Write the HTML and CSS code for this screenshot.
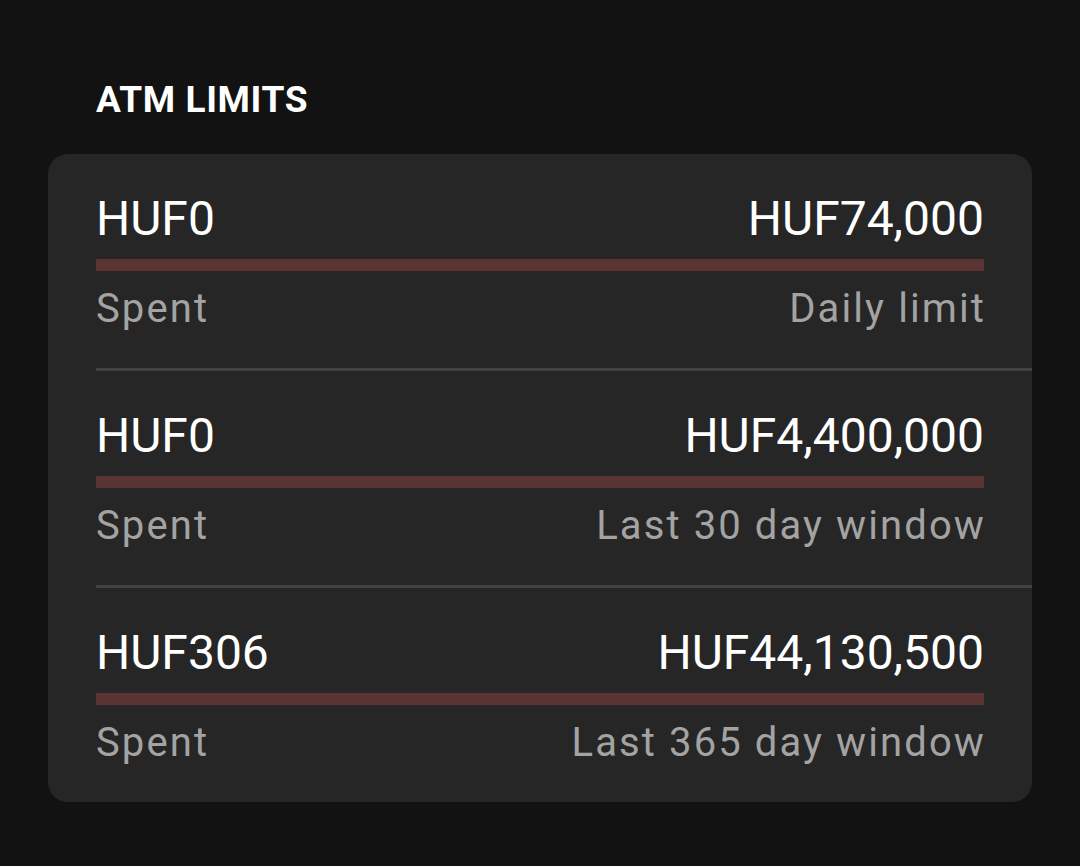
FILE: index.html
```html
<!DOCTYPE html>
<html lang="en">
<head>
    <meta charset="UTF-8">
    <meta name="viewport" content="width=device-width, initial-scale=1.0">
    <link rel="stylesheet" href="styles.css">
    <title>ATM limits</title>
</head>
<body>

<div class="page">
    <h2 class="section-title">ATM LIMITS</h2>

    <div class="card">
        <div class="limit-row">
            <div class="limit-line values">
                <span>HUF0</span>
                <span>HUF74,000</span>
            </div>
            <div class="bar"><div class="bar-fill" style="width:0%"></div></div>
            <div class="limit-line labels">
                <span>Spent</span>
                <span>Daily limit</span>
            </div>
        </div>

        <div class="limit-row">
            <div class="limit-line values">
                <span>HUF0</span>
                <span>HUF4,400,000</span>
            </div>
            <div class="bar"><div class="bar-fill" style="width:0%"></div></div>
            <div class="limit-line labels">
                <span>Spent</span>
                <span>Last 30 day window</span>
            </div>
        </div>

        <div class="limit-row">
            <div class="limit-line values">
                <span>HUF306</span>
                <span>HUF44,130,500</span>
            </div>
            <div class="bar"><div class="bar-fill" style="width:0%"></div></div>
            <div class="limit-line labels">
                <span>Spent</span>
                <span>Last 365 day window</span>
            </div>
        </div>
    </div>
</div>

</body>
</html>
```

FILE: styles.css
```css
html, body{
    margin: 0;
    background-color: #121212;
}
.page{
    padding: 78px 48px 0 48px;
    font-family: Roboto, "Noto Sans", sans-serif;
}
.section-title{
    color: #ffffff;
    font-size: 37px;
    font-weight: 700;
    line-height: 44px;
    letter-spacing: 0.6px;
    margin: 0 0 32px 48px;
}
.card{
    background-color: #262626;
    border-radius: 20px;
    padding-left: 48px;
}
.limit-row{
    padding: 37px 48px 36px 0;
    border-bottom: 3px solid #434343;
}
.limit-row:last-child{
    border-bottom: none;
    padding-bottom: 36px;
}
.limit-line{
    display: flex;
    justify-content: space-between;
}
.values{
    color: #ffffff;
    font-size: 48px;
    line-height: 56px;
}
.labels{
    color: #a3a3a3;
    font-size: 40px;
    line-height: 47px;
    letter-spacing: 2.1px;
    margin-top: 14px;
}
.labels span:last-child{
    margin-right: -2px;
}
.bar{
    height: 12px;
    margin-top: 12px;
    background-color: #5b3434;
}
.bar-fill{
    height: 100%;
    background-color: #c0504d;
}
```
